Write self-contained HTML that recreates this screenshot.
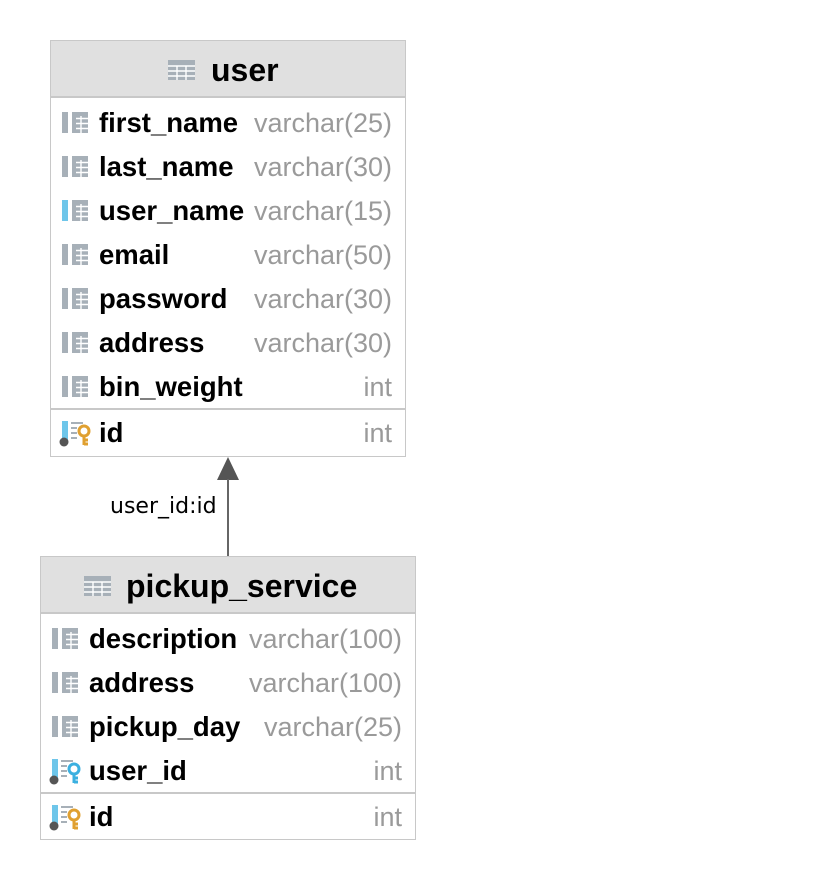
<!DOCTYPE html>
<html><head><style>
body{margin:0;width:828px;height:880px;background:#fff;position:relative;font-family:"Liberation Sans",sans-serif;overflow:hidden}
.box{position:absolute;border:1px solid #c8c8c8;background:#fff;box-sizing:border-box}
.hd{position:absolute;left:0;right:0;top:0;height:57px;background:#e0e0e0;border-bottom:2px solid #c8c8c8;box-sizing:border-box}
.t{position:absolute;height:30px;line-height:30px;white-space:nowrap}
.n{font-weight:bold;font-size:27.5px;color:#000}
.ty{font-size:27px;color:#9a9a9a;text-align:right}
.h{font-weight:bold;font-size:32px;color:#000}
.sep{position:absolute;left:0;right:0;height:2px;background:#c8c8c8}
svg{position:absolute}
</style></head><body>

<svg width="0" height="0" style="position:absolute">
<defs>
<g id="col"><rect x="0" y="0" width="6" height="21" fill="#a7b0b8"/><rect x="10" y="0" width="16" height="21" fill="#a7b0b8"/><path d="M14 6.5H26M14 11.5H26M14 16.5H26M19 4V21" stroke="#fff" stroke-width="1.4"/></g>
<g id="colb"><rect x="0" y="0" width="6" height="21" fill="#6ec6ea"/><rect x="10" y="0" width="16" height="21" fill="#a7b0b8"/><path d="M14 6.5H26M14 11.5H26M14 16.5H26M19 4V21" stroke="#fff" stroke-width="1.4"/></g>
<g id="tbl"><rect x="0" y="0" width="27" height="20" fill="#a7b0b8"/><path d="M0 6H27M0 11H27M0 16H27M9 6V20M18 6V20" stroke="#fff" stroke-width="1.4"/></g>
</defs></svg>

<div class="box" style="left:50px;top:40px;width:356px;height:417px">
<div class="hd"></div>
<div class="sep" style="top:367px"></div>
</div>
<svg style="left:168px;top:60px" width="27" height="20"><use href="#tbl"/></svg>
<div class="t h" style="left:211px;top:55px">user</div>

<svg style="left:62px;top:112px" width="27" height="22"><use href="#col"/></svg>
<div class="t n" style="left:99px;top:108px">first_name</div><div class="t ty" style="right:436px;top:108px">varchar(25)</div>
<svg style="left:62px;top:156px" width="27" height="22"><use href="#col"/></svg>
<div class="t n" style="left:99px;top:152px">last_name</div><div class="t ty" style="right:436px;top:152px">varchar(30)</div>
<svg style="left:62px;top:200px" width="27" height="22"><use href="#colb"/></svg>
<div class="t n" style="left:99px;top:196px">user_name</div><div class="t ty" style="right:436px;top:196px">varchar(15)</div>
<svg style="left:62px;top:244px" width="27" height="22"><use href="#col"/></svg>
<div class="t n" style="left:99px;top:240px">email</div><div class="t ty" style="right:436px;top:240px">varchar(50)</div>
<svg style="left:62px;top:288px" width="27" height="22"><use href="#col"/></svg>
<div class="t n" style="left:99px;top:284px">password</div><div class="t ty" style="right:436px;top:284px">varchar(30)</div>
<svg style="left:62px;top:332px" width="27" height="22"><use href="#col"/></svg>
<div class="t n" style="left:99px;top:328px">address</div><div class="t ty" style="right:436px;top:328px">varchar(30)</div>
<svg style="left:62px;top:376px" width="27" height="22"><use href="#col"/></svg>
<div class="t n" style="left:99px;top:372px">bin_weight</div><div class="t ty" style="right:436px;top:372px">int</div>

<svg style="left:59px;top:420px" width="36" height="28">
<rect x="3" y="1" width="6" height="19" fill="#6ec6ea"/><circle cx="5" cy="22" r="4.5" fill="#555"/>
<path d="M12 3H24M12 8H18M12 13H18M12 18H18" stroke="#a7b0b8" stroke-width="2"/>
<circle cx="25" cy="11" r="5" fill="none" stroke="#e0a030" stroke-width="3"/><path d="M25 16V25M25 20H29M25 24H29" stroke="#e0a030" stroke-width="3"/></svg>
<div class="t n" style="left:99px;top:418px">id</div><div class="t ty" style="right:436px;top:418px">int</div>

<svg style="left:210px;top:455px" width="40" height="102">
<path d="M18 2L7 25H29Z" fill="#555"/><rect x="17" y="24" width="2" height="77" fill="#666"/></svg>
<div class="t" style="left:110px;top:492px;font-size:22px;color:#000;font-family:'DejaVu Sans',sans-serif">user_id:id</div>

<div class="box" style="left:40px;top:556px;width:376px;height:284px">
<div class="hd"></div>
<div class="sep" style="top:235px"></div>
</div>
<svg style="left:84px;top:576px" width="27" height="20"><use href="#tbl"/></svg>
<div class="t h" style="left:126px;top:571px">pickup_service</div>

<svg style="left:52px;top:628px" width="27" height="22"><use href="#col"/></svg>
<div class="t n" style="left:89px;top:624px">description</div><div class="t ty" style="right:426px;top:624px">varchar(100)</div>
<svg style="left:52px;top:672px" width="27" height="22"><use href="#col"/></svg>
<div class="t n" style="left:89px;top:668px">address</div><div class="t ty" style="right:426px;top:668px">varchar(100)</div>
<svg style="left:52px;top:716px" width="27" height="22"><use href="#col"/></svg>
<div class="t n" style="left:89px;top:712px">pickup_day</div><div class="t ty" style="right:426px;top:712px">varchar(25)</div>

<svg style="left:49px;top:758px" width="36" height="28">
<rect x="3" y="1" width="6" height="19" fill="#6ec6ea"/><circle cx="5" cy="22" r="4.5" fill="#555"/>
<path d="M12 3H24M12 8H18M12 13H18M12 18H18" stroke="#a7b0b8" stroke-width="2"/>
<circle cx="25" cy="11" r="5" fill="none" stroke="#3bb0e0" stroke-width="3"/><path d="M25 16V25M25 20H29M25 24H29" stroke="#3bb0e0" stroke-width="3"/></svg>
<div class="t n" style="left:89px;top:756px">user_id</div><div class="t ty" style="right:426px;top:756px">int</div>

<svg style="left:49px;top:804px" width="36" height="28">
<rect x="3" y="1" width="6" height="19" fill="#6ec6ea"/><circle cx="5" cy="22" r="4.5" fill="#555"/>
<path d="M12 3H24M12 8H18M12 13H18M12 18H18" stroke="#a7b0b8" stroke-width="2"/>
<circle cx="25" cy="11" r="5" fill="none" stroke="#e0a030" stroke-width="3"/><path d="M25 16V25M25 20H29M25 24H29" stroke="#e0a030" stroke-width="3"/></svg>
<div class="t n" style="left:89px;top:802px">id</div><div class="t ty" style="right:426px;top:802px">int</div>

</body></html>
